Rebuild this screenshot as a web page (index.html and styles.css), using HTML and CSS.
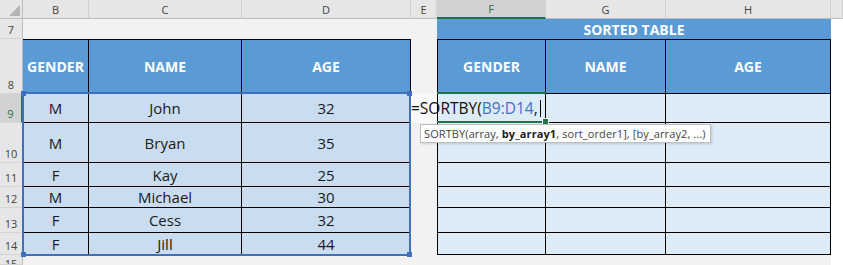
FILE: index.html
```html
<!DOCTYPE html>
<html lang="en">
<head>
    <meta charset="UTF-8">
    <title>SORTBY - Sorted Table</title>
    <link rel="stylesheet" href="styles.css">
</head>
<body>
    <div class="sheet">
        <div class="grid">
            <!-- column headers -->
            <div class="corner"><span class="corner-tri"></span></div>
            <div class="colhead">B</div>
            <div class="colhead">C</div>
            <div class="colhead">D</div>
            <div class="colhead">E</div>
            <div class="colhead sel">F</div>
            <div class="colhead">G</div>
            <div class="colhead">H</div>
            <div class="colhead"></div>

            <!-- row 7 -->
            <div class="rowhead">7</div>
            <div class="blank"></div>
            <div class="blank"></div>
            <div class="blank"></div>
            <div class="blank"></div>
            <div class="title">SORTED TABLE</div>
            <div class="blank white"></div>

            <!-- row 8 -->
            <div class="rowhead">8</div>
            <div class="th">GENDER</div>
            <div class="th">NAME</div>
            <div class="th last">AGE</div>
            <div class="blank"></div>
            <div class="th first">GENDER</div>
            <div class="th">NAME</div>
            <div class="th">AGE</div>
            <div class="blank white"></div>

            <!-- row 9 -->
            <div class="rowhead sel">9</div>
            <div class="td">M</div>
            <div class="td">John</div>
            <div class="td">32</div>
            <div class="blank editing"></div>
            <div class="td out first"></div>
            <div class="td out"></div>
            <div class="td out"></div>
            <div class="blank white"></div>

            <!-- row 10 -->
            <div class="rowhead">10</div>
            <div class="td">M</div>
            <div class="td">Bryan</div>
            <div class="td">35</div>
            <div class="blank"></div>
            <div class="td out first"></div>
            <div class="td out"></div>
            <div class="td out"></div>
            <div class="blank white"></div>

            <!-- row 11 -->
            <div class="rowhead">11</div>
            <div class="td">F</div>
            <div class="td">Kay</div>
            <div class="td">25</div>
            <div class="blank"></div>
            <div class="td out first"></div>
            <div class="td out"></div>
            <div class="td out"></div>
            <div class="blank white"></div>

            <!-- row 12 -->
            <div class="rowhead">12</div>
            <div class="td">M</div>
            <div class="td">Michael</div>
            <div class="td">30</div>
            <div class="blank"></div>
            <div class="td out first"></div>
            <div class="td out"></div>
            <div class="td out"></div>
            <div class="blank white"></div>

            <!-- row 13 -->
            <div class="rowhead">13</div>
            <div class="td">F</div>
            <div class="td">Cess</div>
            <div class="td">32</div>
            <div class="blank"></div>
            <div class="td out first"></div>
            <div class="td out"></div>
            <div class="td out"></div>
            <div class="blank white"></div>

            <!-- row 14 -->
            <div class="rowhead">14</div>
            <div class="td">F</div>
            <div class="td">Jill</div>
            <div class="td">44</div>
            <div class="blank"></div>
            <div class="td out first"></div>
            <div class="td out"></div>
            <div class="td out"></div>
            <div class="blank white"></div>

            <!-- row 15 -->
            <div class="rowhead top">15</div>
            <div class="blank"></div>
            <div class="blank"></div>
            <div class="blank"></div>
            <div class="blank"></div>
            <div class="blank"></div>
            <div class="blank"></div>
            <div class="blank"></div>
            <div class="blank white"></div>
        </div>

        <!-- reference highlight for B9:D14 -->
        <div class="ref-range">
            <span class="handle tl"></span>
            <span class="handle tr"></span>
            <span class="handle bl"></span>
            <span class="handle br"></span>
        </div>

        <!-- active cell F9 -->
        <div class="active-cell"><span class="fill-handle"></span></div>

        <!-- in-cell editor -->
        <div class="editor">=SORTBY(<span class="ref">B9:D14</span>,<span class="caret"></span></div>

        <div class="tooltip">SORTBY(array, <b>by_array1</b>, sort_order1], [by_array2, ...)</div>
    </div>
</body>
</html>
```

FILE: styles.css
```css
body { margin: 0; font-family: "Open Sans", "Liberation Sans", sans-serif; background: #fff; }
.sheet { position: relative; width: 843px; height: 265px; overflow: hidden; }
.grid { display: grid; grid-template-columns: 23px 66px 153px 169px 26px 109px 120px 165px 12px; grid-template-rows: 19px 20px 55px 29px 40px 24px 21px 25px 22px 10px; }
.grid > div { box-sizing: border-box; overflow: hidden; }

.corner { background: #e6e6e6; border-right: 1px solid #bdbdbd; border-bottom: 1px solid #bdbdbd; position: relative; }
.corner-tri { position: absolute; right: 2px; bottom: 2px; width: 0; height: 0; border-left: 11px solid transparent; border-bottom: 11px solid #b4b4b4; }
.colhead { background: #e6e6e6; color: #444; font-size: 11px; display: flex; align-items: center; justify-content: center; border-right: 1px solid #d0d0d0; border-bottom: 1px solid #bdbdbd; }
.colhead.sel { background: #d2d2d2; color: #217346; border-bottom: 2px solid #217346; }

.rowhead { background: #e6e6e6; color: #444; font-size: 11px; display: flex; align-items: flex-end; justify-content: center; padding-bottom: 1px; border-right: 1px solid #bdbdbd; border-bottom: 1px solid #d4d4d4; }
.rowhead.sel { background: #d2d2d2; color: #217346; border-right: 2px solid #217346; }
.rowhead.top { align-items: flex-start; padding-top: 1px; }

.blank { background: #f2f2f2; }
.blank.white { background: #fff; }
.blank.editing { background: #fafafa; }

.title { grid-column: span 3; background: #5b9bd5; color: #fff; font-weight: bold; font-size: 14px; display: flex; align-items: center; justify-content: center; }

.th { background: #5b9bd5; color: #fff; font-weight: bold; font-size: 14px; display: flex; align-items: center; justify-content: center; border-top: 1px solid #000; border-right: 1px solid #000; border-bottom: 1px solid #000; }
.th.first, .td.first { border-left: 1px solid #000; }

.td { background: #c9dcf0; color: #1a1a1a; font-size: 15px; display: flex; align-items: center; justify-content: center; border-right: 1px solid #000; border-bottom: 1px solid #000; }
.td.out { background: #ddebf7; }

.ref-range { position: absolute; left: 22px; top: 92px; width: 389px; height: 164px; box-sizing: border-box; border: 2px solid #3f6fbf; }
.handle { position: absolute; width: 5px; height: 5px; background: #3f6fbf; }
.handle.tl { left: -3px; top: -3px; }
.handle.tr { right: -3px; top: -3px; }
.handle.bl { left: -3px; bottom: -3px; }
.handle.br { right: -3px; bottom: -3px; }

.active-cell { position: absolute; left: 437px; top: 92px; width: 109px; height: 31px; box-sizing: border-box; border-top: 2px solid #217346; border-bottom: 2px solid #217346; }
.fill-handle { position: absolute; right: -3px; bottom: -4px; width: 5px; height: 5px; background: #217346; border: 1px solid #fff; }

.editor { position: absolute; left: 411px; top: 94px; height: 28px; display: flex; align-items: center; font-size: 15.5px; color: #111; white-space: nowrap; }
.editor .ref { color: #4472c4; }
.caret { display: inline-block; width: 1px; height: 17px; background: #000; margin-left: 2px; }

.tooltip { position: absolute; left: 420px; top: 124px; width: 291px; height: 19px; box-sizing: border-box; background: #fff; border: 1px solid #bebebe; box-shadow: 1px 1px 2px rgba(0,0,0,0.15); color: #444; font-size: 11px; letter-spacing: 0.1px; line-height: 17px; padding-left: 3px; white-space: nowrap; }
.tooltip b { color: #222; }
```
